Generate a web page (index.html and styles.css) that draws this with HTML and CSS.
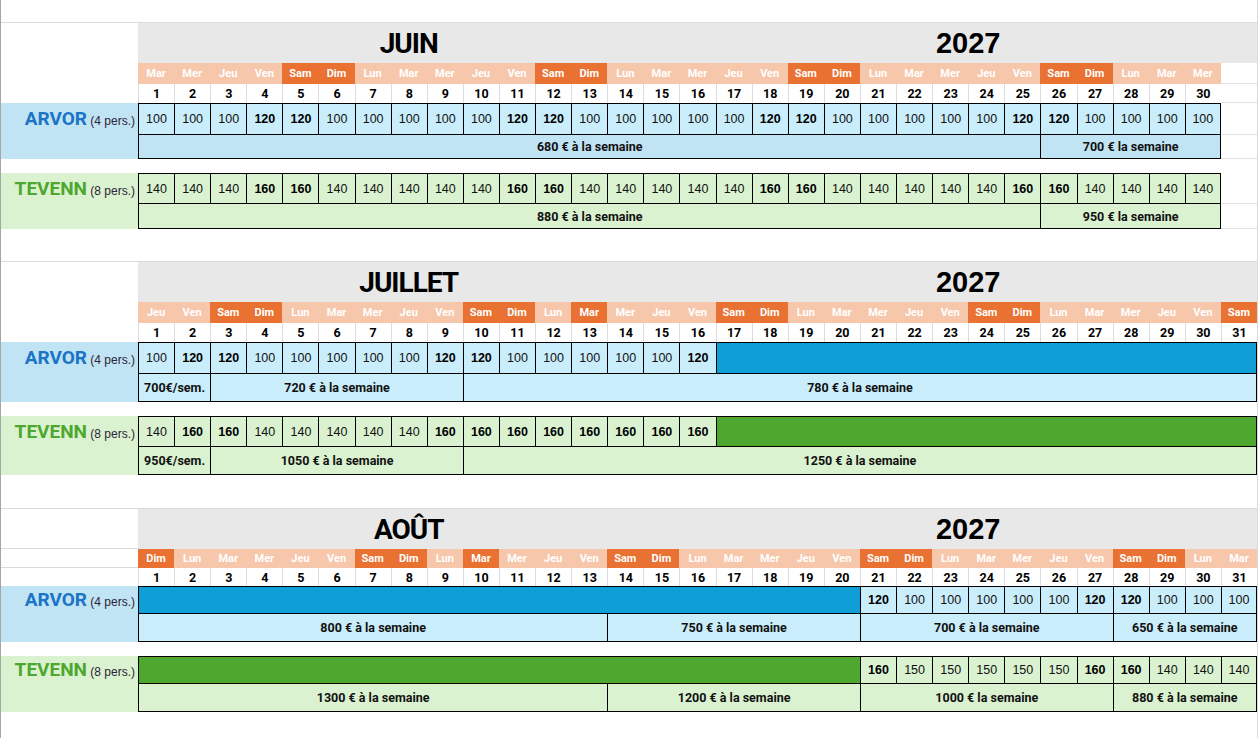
FILE: index.html
```html
<!DOCTYPE html>
<html lang="fr">
<head>
<meta charset="utf-8">
<title>Tarifs 2027</title>
<link rel="stylesheet" href="styles.css">
</head>
<body>
<div class="sheet">

  <section class="month jun">
    <div class="c1"></div><div class="c2"></div><div class="c3"></div>
    <div class="title mname">JUIN</div>
    <div class="title year">2027</div>
    <div class="row names">
      <div>Mar</div><div>Mer</div><div>Jeu</div><div>Ven</div><div class="we">Sam</div><div class="we">Dim</div><div>Lun</div><div>Mar</div><div>Mer</div><div>Jeu</div><div>Ven</div><div class="we">Sam</div><div class="we">Dim</div><div>Lun</div><div>Mar</div><div>Mer</div><div>Jeu</div><div>Ven</div><div class="we">Sam</div><div class="we">Dim</div><div>Lun</div><div>Mar</div><div>Mer</div><div>Jeu</div><div>Ven</div><div class="we">Sam</div><div class="we">Dim</div><div>Lun</div><div>Mar</div><div>Mer</div><div class="blank"></div>
    </div>
    <div class="row nums">
      <div>1</div><div>2</div><div>3</div><div>4</div><div>5</div><div>6</div><div>7</div><div>8</div><div>9</div><div>10</div><div>11</div><div>12</div><div>13</div><div>14</div><div>15</div><div>16</div><div>17</div><div>18</div><div>19</div><div>20</div><div>21</div><div>22</div><div>23</div><div>24</div><div>25</div><div>26</div><div>27</div><div>28</div><div>29</div><div>30</div><div class="blank"></div>
    </div>
    <div class="lbl arv"><div class="lname"><span class="nm">ARVOR</span><span class="pers"> (4 pers.)</span></div></div>
    <div class="row prices arv">
      <div>100</div><div>100</div><div>100</div><div class="b">120</div><div class="b">120</div><div>100</div><div>100</div><div>100</div><div>100</div><div>100</div><div class="b">120</div><div class="b">120</div><div>100</div><div>100</div><div>100</div><div>100</div><div>100</div><div class="b">120</div><div class="b">120</div><div>100</div><div>100</div><div>100</div><div>100</div><div>100</div><div class="b">120</div><div class="b">120</div><div>100</div><div>100</div><div>100</div><div class="end">100</div><div class="blank"></div>
    </div>
    <div class="row summ arv alt">
      <div class="s25">680 € à la semaine</div><div class="s5 end">700 € la semaine</div><div class="blank"></div>
    </div>
    <div class="gaprow"></div>
    <div class="lbl tev"><div class="lname"><span class="nm">TEVENN</span><span class="pers"> (8 pers.)</span></div></div>
    <div class="row prices tev">
      <div>140</div><div>140</div><div>140</div><div class="b">160</div><div class="b">160</div><div>140</div><div>140</div><div>140</div><div>140</div><div>140</div><div class="b">160</div><div class="b">160</div><div>140</div><div>140</div><div>140</div><div>140</div><div>140</div><div class="b">160</div><div class="b">160</div><div>140</div><div>140</div><div>140</div><div>140</div><div>140</div><div class="b">160</div><div class="b">160</div><div>140</div><div>140</div><div>140</div><div class="end">140</div><div class="blank"></div>
    </div>
    <div class="row summ tev">
      <div class="s25">880 € à la semaine</div><div class="s5 end">950 € la semaine</div><div class="blank"></div>
    </div>
  </section>

  <section class="month jul">
    <div class="c1"></div><div class="c2"></div><div class="c3"></div>
    <div class="title mname">JUILLET</div>
    <div class="title year">2027</div>
    <div class="row names">
      <div>Jeu</div><div>Ven</div><div class="we">Sam</div><div class="we">Dim</div><div>Lun</div><div>Mar</div><div>Mer</div><div>Jeu</div><div>Ven</div><div class="we">Sam</div><div class="we">Dim</div><div>Lun</div><div class="we">Mar</div><div>Mer</div><div>Jeu</div><div>Ven</div><div class="we">Sam</div><div class="we">Dim</div><div>Lun</div><div>Mar</div><div>Mer</div><div>Jeu</div><div>Ven</div><div class="we">Sam</div><div class="we">Dim</div><div>Lun</div><div>Mar</div><div>Mer</div><div>Jeu</div><div>Ven</div><div class="we">Sam</div>
    </div>
    <div class="row nums">
      <div>1</div><div>2</div><div>3</div><div>4</div><div>5</div><div>6</div><div>7</div><div>8</div><div>9</div><div>10</div><div>11</div><div>12</div><div>13</div><div>14</div><div>15</div><div>16</div><div>17</div><div>18</div><div>19</div><div>20</div><div>21</div><div>22</div><div>23</div><div>24</div><div>25</div><div>26</div><div>27</div><div>28</div><div>29</div><div>30</div><div>31</div>
    </div>
    <div class="lbl arv"><div class="lname"><span class="nm">ARVOR</span><span class="pers"> (4 pers.)</span></div></div>
    <div class="row prices arv">
      <div>100</div><div class="b">120</div><div class="b">120</div><div>100</div><div>100</div><div>100</div><div>100</div><div>100</div><div class="b">120</div><div class="b">120</div><div>100</div><div>100</div><div>100</div><div>100</div><div>100</div><div class="b">120</div><div class="band s15 end"></div>
    </div>
    <div class="row summ arv">
      <div class="s2">700€/sem.</div><div class="s7">720 € à la semaine</div><div class="s22 end">780 € à la semaine</div>
    </div>
    <div class="gaprow"></div>
    <div class="lbl tev"><div class="lname"><span class="nm">TEVENN</span><span class="pers"> (8 pers.)</span></div></div>
    <div class="row prices tev">
      <div>140</div><div class="b">160</div><div class="b">160</div><div>140</div><div>140</div><div>140</div><div>140</div><div>140</div><div class="b">160</div><div class="b">160</div><div class="b">160</div><div class="b">160</div><div class="b">160</div><div class="b">160</div><div class="b">160</div><div class="b">160</div><div class="band s15 end"></div>
    </div>
    <div class="row summ tev">
      <div class="s2">950€/sem.</div><div class="s7">1050 € à la semaine</div><div class="s22 end">1250 € à la semaine</div>
    </div>
  </section>

  <section class="month aug">
    <div class="c1"></div><div class="c2"></div><div class="c3"></div>
    <div class="title mname">AOÛT</div>
    <div class="title year">2027</div>
    <div class="row names">
      <div class="we">Dim</div><div>Lun</div><div>Mar</div><div>Mer</div><div>Jeu</div><div>Ven</div><div class="we">Sam</div><div class="we">Dim</div><div>Lun</div><div class="we">Mar</div><div>Mer</div><div>Jeu</div><div>Ven</div><div class="we">Sam</div><div class="we">Dim</div><div>Lun</div><div>Mar</div><div>Mer</div><div>Jeu</div><div>Ven</div><div class="we">Sam</div><div class="we">Dim</div><div>Lun</div><div>Mar</div><div>Mer</div><div>Jeu</div><div>Ven</div><div class="we">Sam</div><div class="we">Dim</div><div>Lun</div><div>Mar</div>
    </div>
    <div class="row nums">
      <div>1</div><div>2</div><div>3</div><div>4</div><div>5</div><div>6</div><div>7</div><div>8</div><div>9</div><div>10</div><div>11</div><div>12</div><div>13</div><div>14</div><div>15</div><div>16</div><div>17</div><div>18</div><div>19</div><div>20</div><div>21</div><div>22</div><div>23</div><div>24</div><div>25</div><div>26</div><div>27</div><div>28</div><div>29</div><div>30</div><div>31</div>
    </div>
    <div class="lbl arv"><div class="lname"><span class="nm">ARVOR</span><span class="pers"> (4 pers.)</span></div></div>
    <div class="row prices arv">
      <div class="band s20"></div><div class="b">120</div><div>100</div><div>100</div><div>100</div><div>100</div><div>100</div><div class="b">120</div><div class="b">120</div><div>100</div><div>100</div><div class="end">100</div>
    </div>
    <div class="row summ arv">
      <div class="s13">800 € à la semaine</div><div class="s7">750 € à la semaine</div><div class="s7">700 € à la semaine</div><div class="s4 end">650 € à la semaine</div>
    </div>
    <div class="gaprow"></div>
    <div class="lbl tev"><div class="lname"><span class="nm">TEVENN</span><span class="pers"> (8 pers.)</span></div></div>
    <div class="row prices tev">
      <div class="band s20"></div><div class="b">160</div><div>150</div><div>150</div><div>150</div><div>150</div><div>150</div><div class="b">160</div><div class="b">160</div><div>140</div><div>140</div><div class="end">140</div>
    </div>
    <div class="row summ tev">
      <div class="s13">1300 € à la semaine</div><div class="s7">1200 € à la semaine</div><div class="s7">1000 € la semaine</div><div class="s4 end">880 € à la semaine</div>
    </div>
  </section>

</div>
</body>
</html>
```

FILE: styles.css
```css
* { box-sizing: border-box; }

html, body {
  margin: 0;
  padding: 0;
  background: #fff;
}

body {
  font-family: "Liberation Sans", Arial, sans-serif;
  color: #000;
}

.sheet {
  width: 1258px;
  min-height: 738px;
  border-left: 1px solid #a6a6a6;
  border-right: 1px solid #dadada;
  overflow: hidden;
}

.month {
  display: grid;
  grid-template-columns: 137px repeat(31, 1fr);
  border-top: 1px solid #dadada;
}

.jun {
  margin-top: 22px;
  grid-template-rows: 40px 21px 19px 32px 24px 14px 31px 25px;
}

.jul {
  margin-top: 32px;
  grid-template-rows: 40px 21px 19px 32px 28px 14px 31px 28px;
}

.aug {
  margin-top: 33px;
  grid-template-rows: 40px 19px 18px 28px 28px 14px 28px 28px;
}

/* label column */
.c1, .c2, .c3 { grid-column: 1; }
.c1 { grid-row: 1; }
.c2 { grid-row: 2; }
.c3 { grid-row: 3; }
.aug .c1, .aug .c2 { border-bottom: 1px solid #dadada; }

.lbl { grid-column: 1; }
.lbl.arv { grid-row: 4 / 6; background: #c1e4f5; }
.lbl.tev { grid-row: 7 / 9; background: #daf2d0; }

.lname {
  height: 32px;
  line-height: 32px;
  text-align: right;
  padding-right: 3px;
  white-space: nowrap;
}
.aug .lname { height: 28px; line-height: 28px; }

.nm {
  font-family: Roboto, "Liberation Sans", sans-serif;
  font-weight: 700;
  font-size: 19px;
}
.arv .nm { color: #1b74c5; }
.tev .nm { color: #4ea72e; }

.pers {
  font-family: "Liberation Sans", Arial, sans-serif;
  font-size: 12px;
  color: #2d2236;
}

/* title row */
.title {
  background: #e8e8e8;
  display: flex;
  align-items: center;
  justify-content: center;
  font-weight: 700;
}
.mname {
  grid-column: span 15;
  font-family: Roboto, "Liberation Sans", sans-serif;
  font-size: 28px;
  letter-spacing: -1px;
}
.year {
  grid-column: span 16;
  font-family: "Liberation Sans", Arial, sans-serif;
  font-size: 29px;
}

.gaprow { grid-column: 1 / -1; }

/* rows of cells */
.row { display: contents; }

.names > div {
  display: flex;
  align-items: center;
  justify-content: center;
  background: #f7c7ac;
  color: #fff;
  font-family: Roboto, "Liberation Sans", sans-serif;
  font-weight: 700;
  font-size: 11px;
}
.names > .we { background: #e97132; }

.nums > div {
  display: flex;
  align-items: center;
  justify-content: center;
  font-family: Roboto, "Liberation Sans", sans-serif;
  font-weight: 700;
  font-size: 12.5px;
  border-left: 1px solid #dcdcdc;
}

.prices > div,
.summ > div {
  display: flex;
  align-items: center;
  justify-content: center;
  white-space: nowrap;
  border-left: 1px solid #000;
  border-bottom: 1px solid #000;
}

.prices > div {
  border-top: 1px solid #000;
  font-family: "Liberation Sans", Arial, sans-serif;
  font-size: 12.5px;
  color: #111;
}
.prices > .b { font-weight: 700; color: #000; }

.summ > div {
  font-family: Roboto, "Liberation Sans", sans-serif;
  font-weight: 700;
  font-size: 12.5px;
  color: #111;
}

.row.arv > div { background: #caedfb; }
.row.arv.alt > div { background: #c1e4f5; }
.row.tev > div { background: #daf2d0; }
.row.arv > .band { background: #0f9ed5; }
.row.tev > .band { background: #4ea72e; }

.row > .end { border-right: 1px solid #000; }

.month .row > div.blank {
  border: 0;
  border-bottom: 1px solid #e1e1e1;
  background: #fff;
}
.month .row.alt > div.blank { background: #fff; }

/* spans */
.s2 { grid-column: span 2; }
.s4 { grid-column: span 4; }
.s5 { grid-column: span 5; }
.s7 { grid-column: span 7; }
.s13 { grid-column: span 13; }
.s15 { grid-column: span 15; }
.s20 { grid-column: span 20; }
.s22 { grid-column: span 22; }
.s25 { grid-column: span 25; }
```
